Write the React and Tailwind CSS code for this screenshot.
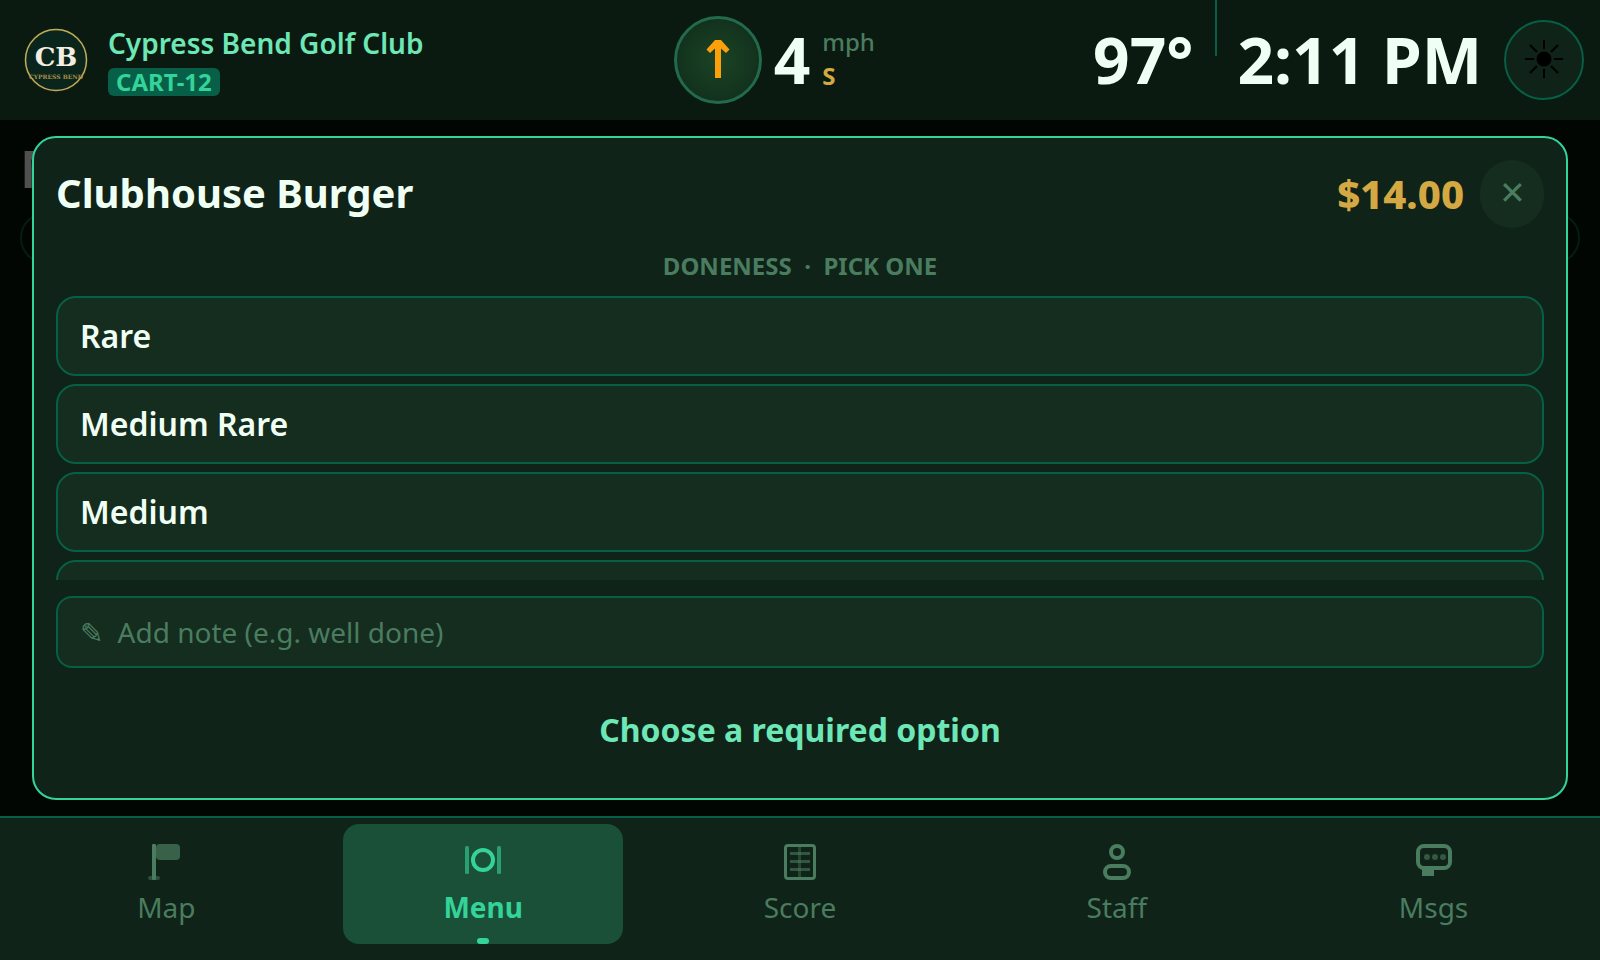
import { useState } from 'react';

const TABS = ['Map', 'Menu', 'Score', 'Staff', 'Msgs'];
const DONENESS = ['Rare', 'Medium Rare', 'Medium', 'Medium Well', 'Well Done'];

function ClubLogo() {
	return (
		<svg viewBox="0 0 64 64" className="size-16 shrink-0" aria-label="Cypress Bend">
			<circle cx="32" cy="32" r="32" fill="#0a261c" />
			<circle cx="32" cy="32" r="30.5" fill="none" stroke="#c9a955" strokeWidth="1.5" />
			<text x="32" y="38" textAnchor="middle" fontSize="26" fontWeight="700" fontFamily="DejaVu Serif, serif" fill="#f3eee0">CB</text>
			<text x="32" y="51" textAnchor="middle" fontSize="6" fontWeight="700" fontFamily="DejaVu Serif, serif" fill="#a98f4c">CYPRESS BEND</text>
		</svg>
	);
}

function TabIcon({ name }) {
	return (
		<svg viewBox="0 0 40 40" className="size-10" fill="none" aria-hidden="true">
			{name === 'Map' && (
				<g fill="#4a7c5f">
					<rect x="6" y="2" width="4" height="36" rx="1" />
					<rect x="10" y="2" width="24" height="16" rx="4" opacity="0.7" />
					<rect x="2" y="34" width="12" height="4" rx="2" opacity="0.5" />
				</g>
			)}
			{name === 'Menu' && (
				<g>
					<rect x="2" y="4" width="4" height="28" rx="1.5" fill="#34d399" opacity="0.6" />
					<rect x="34" y="4" width="4" height="28" rx="1.5" fill="#34d399" opacity="0.6" />
					<circle cx="20" cy="18" r="10" stroke="#34d399" strokeWidth="4" />
				</g>
			)}
			{name === 'Score' && (
				<g fill="#4a7c5f">
					<rect x="5.5" y="3.5" width="29" height="33" rx="2.5" stroke="#4a7c5f" strokeWidth="3" fill="none" />
					<rect x="10" y="10" width="20" height="3" opacity="0.6" />
					<rect x="10" y="18" width="20" height="3" opacity="0.6" />
					<rect x="10" y="26" width="20" height="3" opacity="0.6" />
					<rect x="18" y="5" width="3" height="30" opacity="0.4" />
				</g>
			)}
			{name === 'Staff' && (
				<g stroke="#4a7c5f" strokeWidth="4">
					<circle cx="20" cy="10" r="6" />
					<rect x="8" y="24" width="24" height="12" rx="6" />
				</g>
			)}
			{name === 'Msgs' && (
				<g fill="#4a7c5f">
					<rect x="4" y="4" width="32" height="22" rx="6" stroke="#4a7c5f" strokeWidth="4" fill="none" />
					<rect x="8" y="27" width="12" height="7" />
					<circle cx="13" cy="15" r="3" opacity="0.6" />
					<circle cx="21" cy="15" r="3" opacity="0.6" />
					<circle cx="29" cy="15" r="3" opacity="0.6" />
				</g>
			)}
		</svg>
	);
}

function Header() {
	return (
		<header className="flex h-[120px] shrink-0 items-center justify-between bg-[#0a1a10] pl-6 pr-4">
			<div className="mr-8 flex items-center gap-5">
				<ClubLogo />
				<div className="flex flex-col items-start gap-1.5">
					<div className="text-[28px] leading-[38px] font-semibold text-[#6ee7b7]">Cypress Bend Golf Club</div>
					<div className="rounded-md bg-[#065f46] px-2 text-2xl leading-7 font-bold text-[#34d399]">CART-12</div>
				</div>
			</div>
			<div className="flex items-center gap-3">
				<div className="flex size-22 items-center justify-center rounded-full border-3 border-[#226a4c] bg-[radial-gradient(circle,#1b4425,#0f2a1a)]">
					<svg viewBox="0 0 24 40" className="h-10 w-6" fill="#fb9f0a" aria-label="Wind direction">
						<path d="M9 0H15L23.5 9.5L20 13L15 8.5V38H9V8.5L4 13L0.5 9.5Z" />
					</svg>
				</div>
				<span className="text-[64px] leading-none font-bold text-[#f0fff4]">4</span>
				<div className="flex flex-col pb-0.5 text-2xl leading-[34px]">
					<span className="font-medium text-[#4a7c5f]">mph</span>
					<span className="font-bold text-[#d4a843]">S</span>
				</div>
			</div>
			<div className="flex h-full items-center justify-end text-[64px] leading-none font-bold text-[#f0fff4]">
				<span className="mr-[22px]">97°</span>
				<span className="mr-5 h-14 w-0.5 self-start bg-[#065f46]" />
				<span className="mr-[22px]">2:11 PM</span>
				<button type="button" aria-label="Day mode" className="flex size-20 items-center justify-center rounded-full border-2 border-[#065f46] bg-[#0f2318]">
					<svg viewBox="0 0 40 40" className="size-10" fill="#000" stroke="#000" strokeWidth="2" aria-hidden="true">
						<circle cx="20" cy="19" r="6.5" />
						<path d="M20 0V9M20 29V38M1 19H10M30 19H39M6 5L13 12M27 26L34 33M6 33L13 26M27 12L34 5" />
					</svg>
				</button>
			</div>
		</header>
	);
}

function ItemDialog({ choice, onChoose }) {
	const [note, setNote] = useState('');

	return (
		<section role="dialog" aria-label="Clubhouse Burger" className="absolute inset-x-8 inset-y-4 flex flex-col rounded-3xl border-2 border-[#34d399] bg-[#0f2318] p-[22px]">
			<div className="flex shrink-0 items-center">
				<h1 className="flex-1 pb-0.5 text-[40px] leading-none font-bold text-[#f0fff4]">Clubhouse Burger</h1>
				<span className="mr-4 text-[40px] leading-none font-extrabold text-[#d4a843]">$14.00</span>
				<button type="button" aria-label="Close" className="flex h-[68px] w-16 items-center justify-center rounded-full bg-[#142d1f] pb-1 text-[32px] text-[#4a7c5f]">✕</button>
			</div>
			<fieldset className="mt-4 min-h-0 flex-1 overflow-hidden">
				<legend className="mb-2 w-full text-center text-2xl leading-[44px] font-bold whitespace-pre text-[#4a7c5f]">DONENESS  ·  PICK ONE</legend>
				<div className="flex flex-col gap-2">
					{DONENESS.map((name) => (
						<label key={name} className="flex h-20 shrink-0 items-center rounded-[20px] border-2 border-[#065f46] bg-[#142d1f] px-[22px] text-[32px] font-semibold text-[#f0fff4] has-checked:border-[#34d399]">
							<input type="radio" name="doneness" className="sr-only" checked={choice === name} onChange={() => onChoose(name)} />
							{name}
						</label>
					))}
				</div>
			</fieldset>
			<input
				type="text"
				aria-label="Note"
				placeholder="✎  Add note (e.g. well done)"
				value={note}
				onChange={(e) => setNote(e.target.value)}
				className="mt-4 h-18 w-full shrink-0 rounded-2xl border-2 border-[#065f46] bg-[#142d1f] px-[22px] text-[28px] text-[#f0fff4] placeholder:text-[#4a7c5f]"
			/>
			<button type="button" className="mt-4 h-[92px] shrink-0 text-[32px] font-bold text-[#6ee7b7]">
				{choice ? 'Add to order' : 'Choose a required option'}
			</button>
		</section>
	);
}

function TabBar({ active, onSelect }) {
	return (
		<nav className="flex h-36 shrink-0 items-start justify-around border-t-2 border-[#065f46] bg-[#0f2318] px-2 pt-1.5">
			{TABS.map((name) => (
				<button
					key={name}
					type="button"
					onClick={() => onSelect(name)}
					className={name === active
						? 'relative flex h-[120px] w-[280px] flex-col items-center gap-1 rounded-2xl bg-[#1a5038] pt-[18px] text-[28px] leading-[42px] font-bold text-[#34d399]'
						: 'relative flex h-[120px] w-[280px] flex-col items-center gap-1 rounded-2xl pt-[18px] text-[28px] leading-[42px] text-[#4a7c5f]'}
				>
					<TabIcon name={name} />
					{name}
					{name === active && <span className="absolute bottom-0 h-1.5 w-3 rounded-full bg-[#34d399]" />}
				</button>
			))}
		</nav>
	);
}

function App() {
	const [tab, setTab] = useState('Menu');
	const [choice, setChoice] = useState('');

	return (
		<div className="flex h-screen flex-col overflow-hidden bg-[#020603] font-['Noto_Sans',sans-serif]">
			<Header />
			<main className="relative min-h-0 flex-1 overflow-hidden px-5 pt-3">
				<h2 className="text-[52px] leading-[72px] font-bold text-[#505050]">Menu</h2>
				<div className="mt-2 h-[52px] rounded-full border-2 border-[#031d14]" />
				<ItemDialog choice={choice} onChoose={setChoice} />
			</main>
			<TabBar active={tab} onSelect={setTab} />
		</div>
	);
}

export default App;
